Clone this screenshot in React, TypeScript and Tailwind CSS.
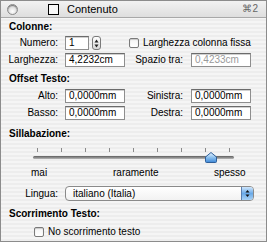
import React from "react";

const font = "font-['Liberation_Sans','Lucida_Grande',sans-serif]";

function Field({ value, dim }: { value: string; dim?: boolean }) {
  return (
    <div
      className={`h-[14px] w-[60px] border border-[#8e8e8e] border-t-[#6b6b6b] bg-white pl-[3px] text-[10px] leading-[12px] shadow-[inset_0_1px_0_#d0d0d0] ${
        dim ? "text-[#9a9a9a]" : "text-black"
      }`}
    >
      {value}
    </div>
  );
}

function Label({ children, w = "w-[57px]" }: { children: React.ReactNode; w?: string }) {
  return <div className={`${w} shrink-0 text-right text-[10px] leading-[14px] text-black`}>{children}</div>;
}

function Check() {
  return (
    <div className="h-[10px] w-[10px] shrink-0 rounded-[2px] border border-[#7a7a7a] bg-gradient-to-b from-[#f4f4f4] to-white shadow-[inset_0_1px_1px_#c8c8c8]" />
  );
}

function Header({ children }: { children: React.ReactNode }) {
  return <div className="pl-[8px] text-[10px] font-bold leading-[12px] text-black">{children}</div>;
}

export default function App() {
  const ticks = [37, 61, 85, 109, 133, 157, 181, 205, 229];
  return (
    <div
      className={`${font} relative h-[242px] w-[267px] overflow-hidden border border-[#8c8c8c] bg-[repeating-linear-gradient(0deg,#ededed_0px,#ededed_2px,#f5f5f5_2px,#f5f5f5_4px)]`}
    >
      {/* title bar */}
      <div className="flex h-[17px] items-center border-b border-[#a8a8a8] bg-gradient-to-b from-[#f2f2f2] to-[#dedede]">
        <div className="ml-[6px] h-[11px] w-[11px] rounded-full border border-[#8a8a8a] bg-[radial-gradient(circle_at_50%_70%,#ffffff,#c4c4c4)] shadow-[inset_0_1px_1px_#777]" />
        <div className="ml-[30px] h-[11px] w-[11px] border border-black bg-[#f8f8f8]" />
        <div className="ml-[8px] text-[11px] leading-[14px] text-black">Contenuto</div>
        <div className="ml-auto mr-[8px] text-[10px] leading-[14px] text-[#666]">⌘2</div>
      </div>

      <div className="flex flex-col pt-[3px]">
        <Header>Colonne:</Header>
        <div className="mt-[3px] flex items-center">
          <Label>Numero:</Label>
          <div className="ml-[7px] h-[14px] w-[24px] border border-[#8e8e8e] border-t-[#6b6b6b] bg-white pl-[3px] text-[10px] leading-[12px] shadow-[inset_0_1px_0_#d0d0d0]">
            1
          </div>
          <div className="ml-[3px] flex h-[14px] w-[9px] flex-col items-center justify-center rounded-[3px] border border-[#7a7a7a] bg-gradient-to-b from-white to-[#d8d8d8]">
            <svg width="5" height="9" viewBox="0 0 5 9">
              <path d="M2.5 0.5 L4.5 3.5 L0.5 3.5 Z" fill="#222" />
              <path d="M2.5 8.5 L4.5 5.5 L0.5 5.5 Z" fill="#222" />
            </svg>
          </div>
          <div className="ml-[28px] flex items-center">
            <Check />
            <span className="ml-[4px] text-[10px] leading-[14px]">Larghezza colonna fissa</span>
          </div>
        </div>
        <div className="mt-[3px] flex items-center">
          <Label>Larghezza:</Label>
          <div className="ml-[7px]">
            <Field value="4,2232cm" />
          </div>
          <Label w="w-[58px]">Spazio tra:</Label>
          <div className="ml-[8px]">
            <Field value="0,4233cm" dim />
          </div>
        </div>

        <div className="mt-[6px]">
          <Header>Offset Testo:</Header>
        </div>
        <div className="mt-[4px] flex items-center">
          <Label>Alto:</Label>
          <div className="ml-[7px]">
            <Field value="0,0000mm" />
          </div>
          <Label w="w-[58px]">Sinistra:</Label>
          <div className="ml-[8px]">
            <Field value="0,0000mm" />
          </div>
        </div>
        <div className="mt-[3px] flex items-center">
          <Label>Basso:</Label>
          <div className="ml-[7px]">
            <Field value="0,0000mm" />
          </div>
          <Label w="w-[58px]">Destra:</Label>
          <div className="ml-[8px]">
            <Field value="0,0000mm" />
          </div>
        </div>

        <div className="mt-[8px]">
          <Header>Sillabazione:</Header>
        </div>
        {/* slider */}
        <div className="relative mt-[2px] h-[30px]">
          {ticks.map((x) => (
            <div key={x} className="absolute top-[6px] h-[4px] w-[1px] bg-[#8a8a8a]" style={{ left: x - 1 }} />
          ))}
          <div className="absolute left-[32px] top-[14px] h-[3px] w-[201px] rounded-full bg-gradient-to-b from-[#5e5e5e] to-[#b8b8b8]" />
          <svg className="absolute left-[203px] top-[10px]" width="14" height="11" viewBox="0 0 14 11">
            <defs>
              <linearGradient id="th" x1="0" y1="0" x2="0" y2="1">
                <stop offset="0" stopColor="#e8f4ff" />
                <stop offset="0.5" stopColor="#8cc0ee" />
                <stop offset="1" stopColor="#3c86d6" />
              </linearGradient>
            </defs>
            <path d="M7 0.5 L12.5 5 L12.5 9.5 Q12.5 10.5 11.5 10.5 L2.5 10.5 Q1.5 10.5 1.5 9.5 L1.5 5 Z" fill="url(#th)" stroke="#2f5f99" strokeWidth="1" />
          </svg>
        </div>
        <div className="relative -mt-[5px] h-[12px] text-[10px] leading-[12px]">
          <span className="absolute left-[30px]">mai</span>
          <span className="absolute left-[112px]">raramente</span>
          <span className="absolute left-[213px]">spesso</span>
        </div>

        <div className="mt-[7px] flex items-center">
          <Label>Lingua:</Label>
          <div className="ml-[7px] flex h-[15px] w-[189px] items-center overflow-hidden rounded-[4px] border border-[#8a8a8a] bg-gradient-to-b from-white to-[#f2f2f2]">
            <span className="flex-1 pl-[7px] text-[10px] leading-[13px]">italiano (Italia)</span>
            <div className="flex h-full w-[12px] items-center justify-center border-l border-[#5a7fb0] bg-gradient-to-b from-[#cfe6fb] via-[#6aaae8] to-[#a9d2f5]">
              <svg width="5" height="9" viewBox="0 0 5 9">
                <path d="M2.5 1 L4.5 3.5 L0.5 3.5 Z" fill="#111" />
                <path d="M2.5 8 L4.5 5.5 L0.5 5.5 Z" fill="#111" />
              </svg>
            </div>
          </div>
        </div>

        <div className="mt-[7px]">
          <Header>Scorrimento Testo:</Header>
        </div>
        <div className="mt-[5px] flex items-center pl-[33px]">
          <Check />
          <span className="ml-[4px] text-[10px] leading-[14px]">No scorrimento testo</span>
        </div>
      </div>
    </div>
  );
}
